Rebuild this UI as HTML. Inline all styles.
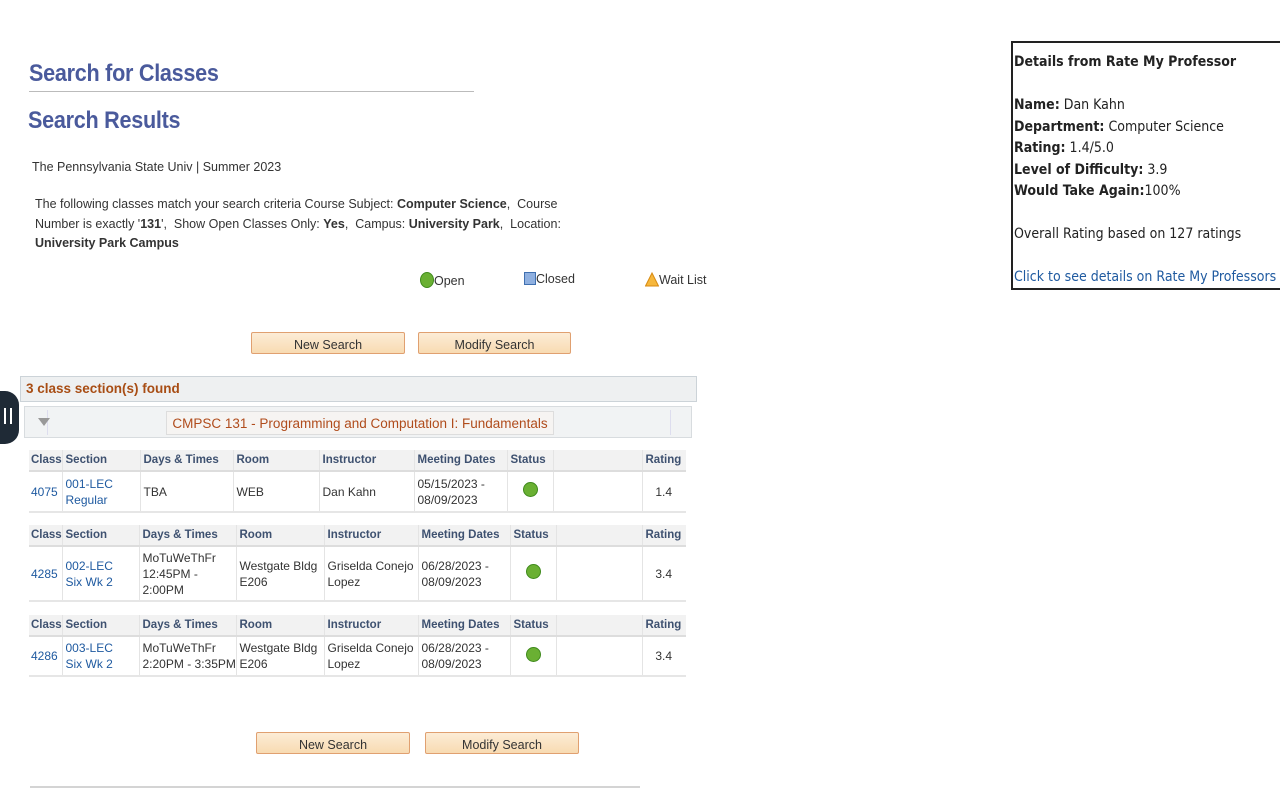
<!DOCTYPE html>
<html><head><meta charset="utf-8">
<style>
*{margin:0;padding:0;box-sizing:border-box}
body{width:1280px;height:800px;background:#fff;position:relative;overflow:hidden;font-family:"Liberation Sans",sans-serif;color:#333;font-size:12px}
.a{position:absolute;white-space:nowrap}
h1{position:absolute;font-family:"Liberation Sans",sans-serif;font-weight:bold;color:#4a5a9c;font-size:24px;letter-spacing:-0.3px;transform:scaleX(0.9);transform-origin:left top;white-space:nowrap}
.btn{position:absolute;height:22px;border:1px solid #e0a070;border-radius:2px;background:linear-gradient(#fcecd6,#f8dbb2);font-size:12.5px;color:#333;text-align:center;line-height:22px;padding-top:1px}
table{position:absolute;border-collapse:collapse;table-layout:fixed;font-size:12px}
th{background:#f2f2f2;color:#3e5170;font-weight:bold;text-align:left;height:21px;padding:0 3px;border-left:1px solid #e4e4e4;border-bottom:2px solid #ddd;font-size:11.5px;white-space:nowrap;overflow:hidden}
td{vertical-align:middle;padding:0 3px;border-left:1px solid #e4e4e4;border-bottom:2px solid #e6e6e6;line-height:16px;white-space:nowrap;overflow:hidden}
th:first-child,td:first-child{border-left:none;padding:0 2px}
.lk{color:#1f5aa0}
.dot{display:inline-block;width:15px;height:15px;border-radius:50%;background:#6ab033;border:1px solid #3f8a1c}
.r{text-align:right;padding-right:14px}
.c{text-align:center}
.box{position:absolute;left:1011px;top:41px;width:269px;height:249px;border:2px solid #222;border-right:none;font-family:"DejaVu Sans Condensed","Liberation Sans",sans-serif;font-size:14px;color:#222;padding:9px 0 0 1px;line-height:21.5px}
</style></head><body>
<h1 style="left:29px;top:60px">Search for Classes</h1>
<div class="a" style="left:29px;top:91px;width:445px;height:1px;background:#bbb"></div>
<h1 style="left:28px;top:107px">Search Results</h1>
<div class="a" style="left:32px;top:160px;font-size:12.5px">The Pennsylvania State Univ | Summer 2023</div>
<div class="a" style="left:35px;top:195px;line-height:19.5px;font-size:12.5px">The following classes match your search criteria Course Subject: <b>Computer Science</b>,&nbsp; Course<br>Number is exactly '<b>131</b>',&nbsp; Show Open Classes Only: <b>Yes</b>,&nbsp; Campus: <b>University Park</b>,&nbsp; Location:<br><b>University Park Campus</b></div>
<div class="a" style="left:420px;top:272px;font-size:12.5px"><span class="dot" style="vertical-align:-3px;width:14px;height:16px"></span>Open</div>
<div class="a" style="left:524px;top:272px;font-size:12.5px"><span style="display:inline-block;width:12px;height:13px;background:#8fb0e0;border:1px solid #4070b0;vertical-align:-2px"></span>Closed</div>
<div class="a" style="left:645px;top:272px;font-size:12.5px"><svg width="14" height="15" style="vertical-align:-3px"><polygon points="7,1 13.5,14 0.5,14" fill="#f6b73c" stroke="#d88a10"/></svg>Wait List</div>
<div class="btn" style="left:251px;top:332px;width:154px">New Search</div>
<div class="btn" style="left:418px;top:332px;width:153px">Modify Search</div>

<div class="a" style="left:0;top:391px;width:19px;height:53px;background:#1f2a36;border-radius:0 14px 14px 0"></div>
<div class="a" style="left:4px;top:408px;width:2px;height:16px;background:#fff"></div>
<div class="a" style="left:10px;top:408px;width:2px;height:16px;background:#fff"></div>

<div class="a" style="left:20px;top:376px;width:677px;height:26px;background:#eef0f1;border:1px solid #ccd3d8"></div>
<div class="a" style="left:26px;top:381px;font-weight:bold;color:#a84d14;font-size:13.5px">3 class section(s) found</div>
<div class="a" style="left:24px;top:406px;width:668px;height:32px;background:#f1f3f4;border:1px solid #d8dcdf"></div>
<div class="a" style="left:28px;top:410px;width:20px;height:25px;border-right:1px solid #dde"></div>
<div class="a" style="left:38px;top:418px;width:0;height:0;border-left:6px solid transparent;border-right:6px solid transparent;border-top:8px solid #999"></div>
<div class="a" style="left:166px;top:411px;width:388px;height:24px;background:#f6f4f2;border:1px solid #ddd;color:#b04c1c;font-size:13.5px;text-align:center;line-height:24px">CMPSC 131 - Programming and Computation I: Fundamentals</div>
<div class="a" style="left:670px;top:410px;width:18px;height:25px;border-left:1px solid #dde"></div>

<table style="left:29px;top:450px;width:657px">
<colgroup><col width="33"><col width="78"><col width="93"><col width="86"><col width="95"><col width="93"><col width="46"><col width="89"><col width="44"></colgroup>
<tr><th>Class</th><th>Section</th><th>Days &amp; Times</th><th>Room</th><th>Instructor</th><th>Meeting Dates</th><th>Status</th><th></th><th style="text-align:right;padding-right:5px">Rating</th></tr>
<tr style="height:41px"><td class="lk">4075</td><td class="lk">001-LEC<br>Regular</td><td>TBA</td><td>WEB</td><td>Dan Kahn</td><td>05/15/2023 -<br>08/09/2023</td><td class="c"><span class="dot"></span></td><td></td><td class="r">1.4</td></tr>
</table>

<table style="left:29px;top:525px;width:657px">
<colgroup><col width="33"><col width="77"><col width="97"><col width="88"><col width="94"><col width="92"><col width="46"><col width="86"><col width="44"></colgroup>
<tr><th>Class</th><th>Section</th><th>Days &amp; Times</th><th>Room</th><th>Instructor</th><th>Meeting Dates</th><th>Status</th><th></th><th style="text-align:right;padding-right:5px">Rating</th></tr>
<tr style="height:55px"><td class="lk">4285</td><td class="lk">002-LEC<br>Six Wk 2</td><td>MoTuWeThFr<br>12:45PM -<br>2:00PM</td><td>Westgate Bldg<br>E206</td><td>Griselda Conejo<br>Lopez</td><td>06/28/2023 -<br>08/09/2023</td><td class="c"><span class="dot"></span></td><td></td><td class="r">3.4</td></tr>
</table>

<table style="left:29px;top:615px;width:657px">
<colgroup><col width="33"><col width="77"><col width="97"><col width="88"><col width="94"><col width="92"><col width="46"><col width="86"><col width="44"></colgroup>
<tr><th>Class</th><th>Section</th><th>Days &amp; Times</th><th>Room</th><th>Instructor</th><th>Meeting Dates</th><th>Status</th><th></th><th style="text-align:right;padding-right:5px">Rating</th></tr>
<tr style="height:40px"><td class="lk">4286</td><td class="lk">003-LEC<br>Six Wk 2</td><td>MoTuWeThFr<br>2:20PM - 3:35PM</td><td>Westgate Bldg<br>E206</td><td>Griselda Conejo<br>Lopez</td><td>06/28/2023 -<br>08/09/2023</td><td class="c"><span class="dot"></span></td><td></td><td class="r">3.4</td></tr>
</table>

<div class="btn" style="left:256px;top:732px;width:154px">New Search</div>
<div class="btn" style="left:425px;top:732px;width:154px">Modify Search</div>
<div class="a" style="left:30px;top:786px;width:610px;height:2px;background:#d4d4d4"></div>

<div class="box">
<b>Details from Rate My Professor</b><br><br>
<b>Name:</b> Dan Kahn<br>
<b>Department:</b> Computer Science<br>
<b>Rating:</b> 1.4/5.0<br>
<b>Level of Difficulty:</b> 3.9<br>
<b>Would Take Again:</b>100%<br><br>
Overall Rating based on 127 ratings<br><br>
<span style="color:#1f5aa0;white-space:nowrap">Click to see details on Rate My Professors</span>
</div>
</body></html>
